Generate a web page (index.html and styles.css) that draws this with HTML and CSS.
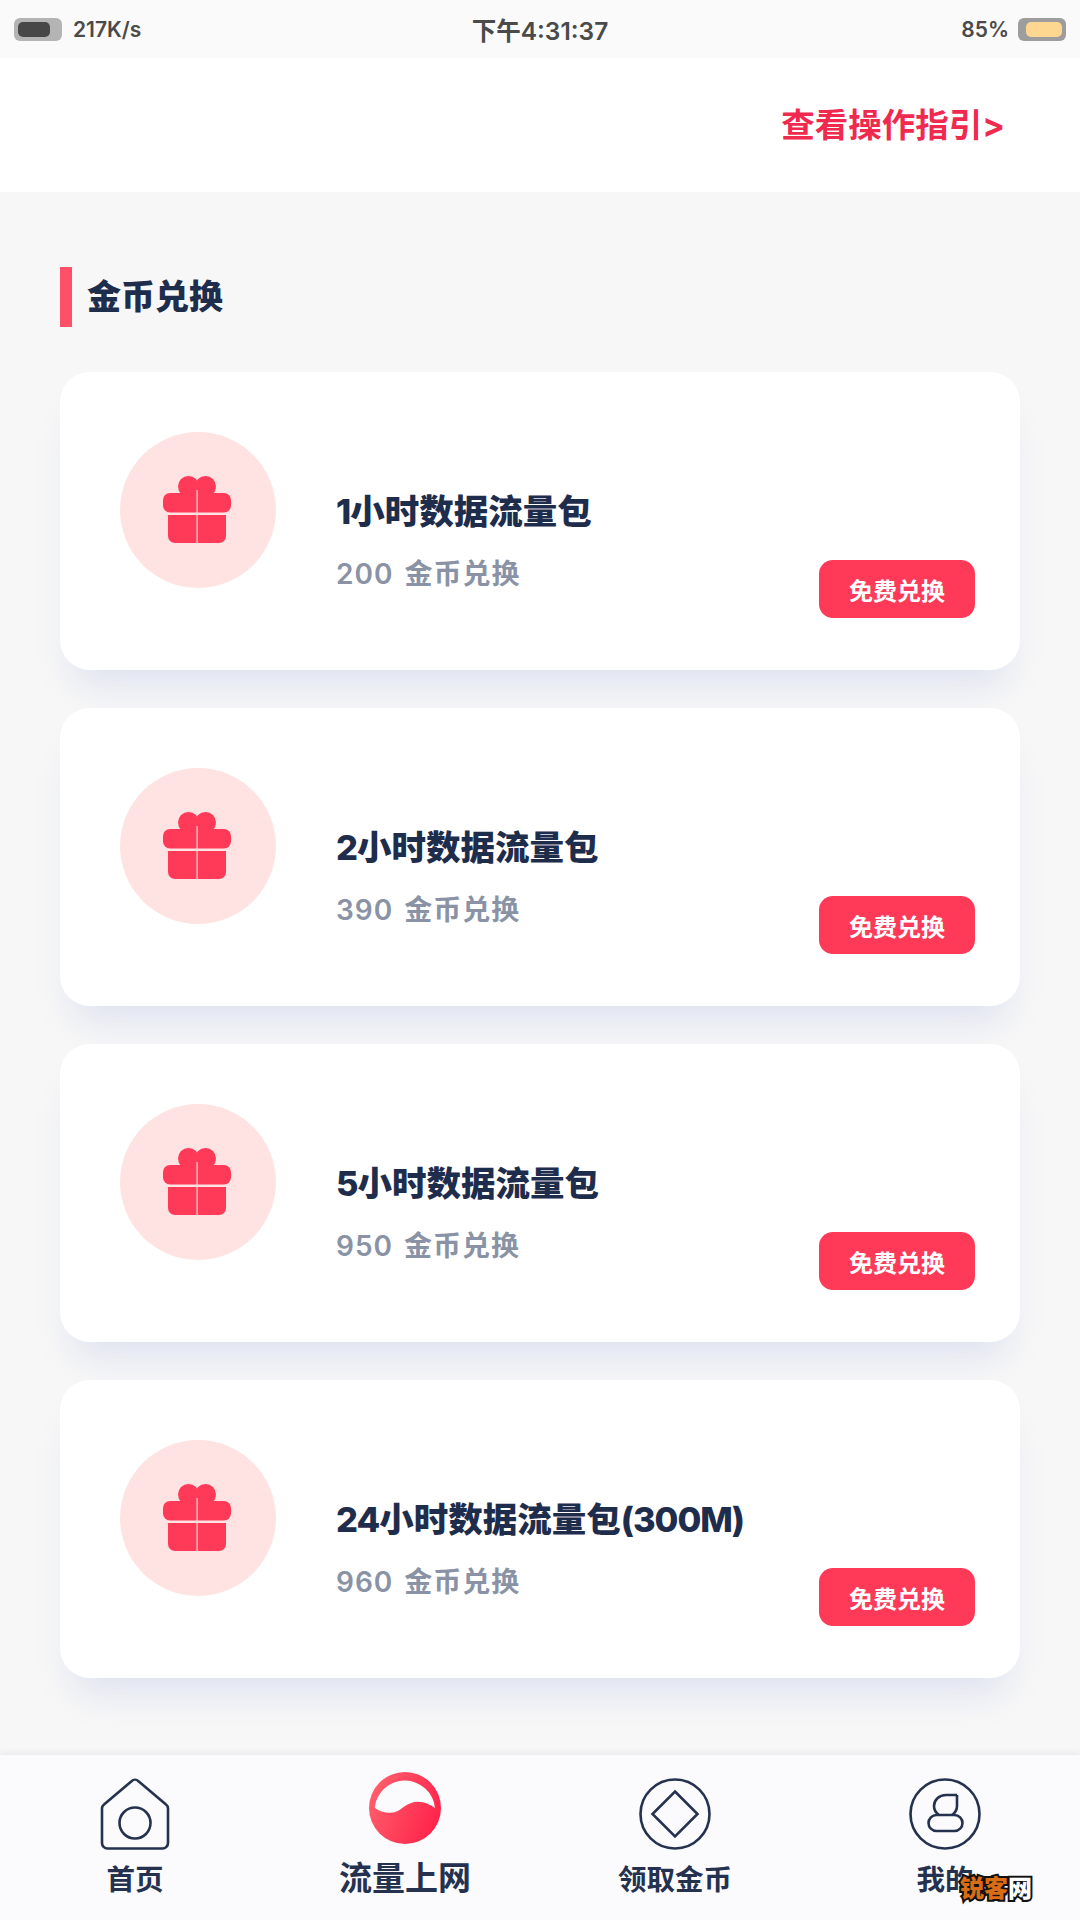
FILE: index.html
```html
<!DOCTYPE html>
<html lang="zh-CN">
<head>
    <meta charset="UTF-8">
    <meta name="viewport" content="width=device-width, initial-scale=1.0">
    <title>金币兑换</title>
    <link rel="stylesheet" href="styles.css">
</head>
<body>

<div class="status-bar">
    <div class="status-left">
        <span class="pill pill-dark"><i></i></span>
        <span class="speed">217K/s</span>
    </div>
    <div class="status-time">下午4:31:37</div>
    <div class="status-right">
        <span class="percent">85%</span>
        <span class="pill pill-battery"><i></i></span>
    </div>
</div>

<header class="top-bar">
    <a class="guide-link">查看操作指引&gt;</a>
</header>

<main class="content">
    <h1 class="section-title">金币兑换</h1>

    <div class="card">
        <div class="gift-circle">
            <svg class="gift" viewBox="0 0 68 68"><use href="#gift-icon"></use></svg>
        </div>
        <div class="card-text">
            <h2><span class="num">1</span>小时数据流量包</h2>
            <p>200 金币兑换</p>
        </div>
        <button class="redeem">免费兑换</button>
    </div>

    <div class="card">
        <div class="gift-circle">
            <svg class="gift" viewBox="0 0 68 68"><use href="#gift-icon"></use></svg>
        </div>
        <div class="card-text">
            <h2><span class="num">2</span>小时数据流量包</h2>
            <p>390 金币兑换</p>
        </div>
        <button class="redeem">免费兑换</button>
    </div>

    <div class="card">
        <div class="gift-circle">
            <svg class="gift" viewBox="0 0 68 68"><use href="#gift-icon"></use></svg>
        </div>
        <div class="card-text">
            <h2><span class="num">5</span>小时数据流量包</h2>
            <p>950 金币兑换</p>
        </div>
        <button class="redeem">免费兑换</button>
    </div>

    <div class="card">
        <div class="gift-circle">
            <svg class="gift" viewBox="0 0 68 68"><use href="#gift-icon"></use></svg>
        </div>
        <div class="card-text">
            <h2><span class="num">24</span>小时数据流量包<span class="num">(300M)</span></h2>
            <p>960 金币兑换</p>
        </div>
        <button class="redeem">免费兑换</button>
    </div>
</main>

<nav class="tab-bar">
    <div class="tab">
        <svg class="tab-icon" viewBox="0 0 72 72" fill="none" stroke="#25324f" stroke-width="2.6" stroke-linejoin="round">
            <path d="M32.5 3.2a5 5 0 0 1 7 0L67 26.5a5 5 0 0 1 2 4V65a5.5 5.5 0 0 1-5.5 5.5h-55A5.5 5.5 0 0 1 3 65V30.500a5 5 0 0 1 2-4z"></path>
            <circle cx="36" cy="45" r="15.500"></circle>
        </svg>
        <span>首页</span>
    </div>
    <div class="tab tab-active">
        <svg class="tab-icon" viewBox="0 0 72 72">
            <defs>
                <linearGradient id="flow" x1="0" y1="0.300" x2="1" y2="0.700">
                    <stop offset="0" stop-color="#ff5f6d"></stop>
                    <stop offset="1" stop-color="#ff2149"></stop>
                </linearGradient>
            </defs>
            <circle cx="36" cy="36" r="36" fill="url(#flow)"></circle>
            <path d="M5.700 35.700C10 39 15 40.700 21 40.700C28 40.700 31 37.500 36 34C40 31.500 44 29.700 49 29.700C55 29.700 61 32.500 66 36A30.300 30.300 0 0 0 5.700 35.700Z" fill="#fbfbfd"></path>
        </svg>
        <span>流量上网</span>
    </div>
    <div class="tab">
        <svg class="tab-icon" viewBox="0 0 72 72" fill="none" stroke="#25324f" stroke-width="2.600">
            <circle cx="36" cy="36" r="34.500"></circle>
            <path d="M36 13.500L58.500 36L36 58.500L13.500 36Z"></path>
        </svg>
        <span>领取金币</span>
    </div>
    <div class="tab">
        <svg class="tab-icon" viewBox="0 0 72 72" fill="none" stroke="#25324f" stroke-width="2.600">
            <circle cx="36" cy="36" r="34.500"></circle>
            <path d="M48 17H37C30 17 25 22 25 28c0 4 2 7 5 9"></path>
            <path d="M48 17V28c0 4-2 7-5 9"></path>
            <rect x="19.500" y="37" width="34" height="16" rx="8"></rect>
        </svg>
        <span>我的</span>
    </div>
    <div class="watermark">锐客<b>网</b></div>
</nav>

<svg class="defs-only">
    <symbol id="gift-icon" viewBox="0 0 68 68">
        <circle cx="25.500" cy="10.500" r="10.500" fill="#ff3a58"></circle>
        <circle cx="42.500" cy="10.500" r="10.500" fill="#ff3a58"></circle>
        <rect x="0" y="17" width="68" height="19.500" rx="7" fill="#ff3a58"></rect>
        <path d="M5 39H63V60a7 7 0 0 1-7 7H12a7 7 0 0 1-7-7Z" fill="#ff3a58"></path>
        <rect x="33.500" y="14" width="1.200" height="53" fill="#ffd5d8"></rect>
    </symbol>
</svg>

</body>
</html>
```

FILE: styles.css
```css
* {
    box-sizing: border-box;
}
html, body {
    margin: 0;
    padding: 0;
}
body {
    width: 1080px;
    height: 1920px;
    overflow: hidden;
    display: flex;
    flex-direction: column;
    background-color: #f7f7f7;
    font-family: Inter, "Noto Sans CJK SC", sans-serif;
    color: #1f2d4d;
}
.defs-only {
    display: none;
}

/* status bar */
.status-bar {
    height: 58px;
    flex: none;
    display: grid;
    grid-template-columns: 1fr auto 1fr;
    align-items: center;
    padding: 0 14px;
    background-color: #fafafa;
    color: #4a4a4a;
    font-weight: 600;
}
.status-left, .status-right {
    display: flex;
    align-items: center;
}
.status-right {
    justify-content: flex-end;
}
.speed {
    margin-left: 11px;
    font-size: 21px;
}
.percent {
    margin-right: 9px;
    font-size: 21px;
}
.status-time {
    font-size: 24.5px;
}
.pill {
    width: 48px;
    height: 23px;
    padding: 4px;
    border-radius: 6px;
    display: flex;
}
.pill i {
    display: block;
    height: 100%;
    border-radius: 5px;
}
.pill-dark {
    background-color: #b4b4b4;
}
.pill-dark i {
    width: 32px;
    background-color: #474747;
}
.pill-battery {
    background-color: #9d9d9d;
    justify-content: flex-end;
}
.pill-battery i {
    width: 36px;
    background-color: #fdd78f;
}

/* top link */
.top-bar {
    height: 134px;
    flex: none;
    display: flex;
    align-items: center;
    justify-content: flex-end;
    padding-right: 75px;
    background-color: #fff;
}
.guide-link {
    color: #f0294f;
    font-size: 33.5px;
    font-weight: 700;
    line-height: 44px;
    margin-top: 0;
}

/* list */
.content {
    flex: 1;
    padding: 75px 60px 0;
}
.section-title {
    height: 60px;
    margin: 0 0 45px;
    padding-left: 15px;
    border-left: 12px solid #ff5068;
    font-size: 34px;
    font-weight: 900;
    line-height: 60px;
}
.card {
    height: 298px;
    margin-bottom: 38px;
    padding: 60px 45px 52px 60px;
    display: flex;
    background-color: #fff;
    border-radius: 30px;
    box-shadow: 0 28px 36px -14px rgba(190, 200, 232, 0.45);
}
.gift-circle {
    width: 156px;
    height: 156px;
    flex: none;
    display: flex;
    align-items: center;
    justify-content: center;
    border-radius: 50%;
    background-color: #ffe3e3;
}
.gift {
    width: 68px;
    height: 68px;
    margin: -1px 2px 0 0;
}
.card-text {
    margin-left: 60px;
    padding-top: 58px;
}
.card-text h2 {
    margin: 0;
    font-size: 34.5px;
    font-weight: 800;
    line-height: 44px;
    white-space: nowrap;
}
.num {
    letter-spacing: -1px;
}
.card-text p {
    margin: 20px 0 0;
    color: #8a93a5;
    font-size: 28px;
    font-weight: 600;
    line-height: 40px;
    letter-spacing: 1px;
    word-spacing: 3px;
}
.redeem {
    width: 156px;
    height: 58px;
    margin-left: auto;
    align-self: flex-end;
    padding: 0;
    border: none;
    border-radius: 14px;
    background-color: #ff3a58;
    color: #fff;
    font-family: inherit;
    font-size: 24px;
    font-weight: 700;
}

/* bottom tabs */
.tab-bar {
    position: relative;
    height: 165px;
    flex: none;
    display: grid;
    grid-template-columns: repeat(4, 1fr);
    background-color: #fbfbfd;
    box-shadow: 0 -3px 6px rgba(0, 0, 0, 0.05);
}
.tab {
    padding-top: 23px;
    display: flex;
    flex-direction: column;
    align-items: center;
    color: #25324f;
    font-size: 28.5px;
    font-weight: 700;
    line-height: 40px;
}
.tab-icon {
    width: 72px;
    height: 72px;
    margin-bottom: 10px;
}
.tab-active {
    padding-top: 17px;
    font-size: 33px;
}
.tab-active .tab-icon {
    margin-bottom: 14px;
}
.watermark {
    position: absolute;
    left: 960px;
    top: 118px;
    color: #d96c15;
    font-size: 24px;
    font-weight: 900;
    line-height: 32px;
    -webkit-text-stroke: 4px #111;
    paint-order: stroke fill;
}
.watermark b {
    color: #fff;
}
```
